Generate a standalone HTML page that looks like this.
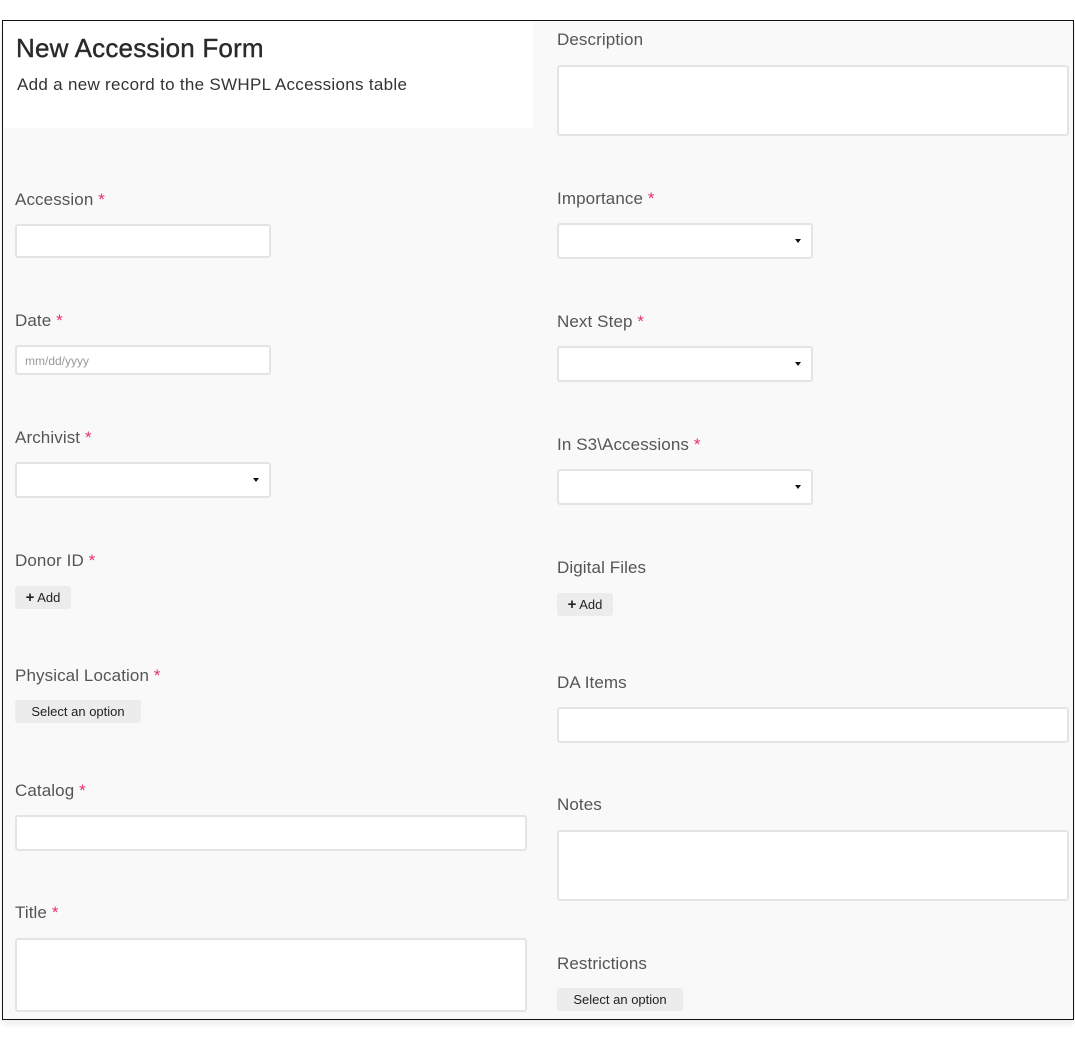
<!DOCTYPE html>
<html><head><meta charset="utf-8"><style>
*{box-sizing:border-box;margin:0;padding:0}
body{width:1075px;height:1039px;background:#fff;position:relative;overflow:hidden;font-family:"Liberation Sans",sans-serif}
.frame{position:absolute;left:2px;top:20px;width:1072px;height:1000px;border:1.5px solid #111;background:#f9f9f9;box-shadow:0 4px 6px rgba(0,0,0,.08)}
.hdr{position:absolute;left:3px;top:21px;width:530px;height:107px;background:#fff}
.t{position:absolute;left:16px;top:33px;font-size:26px;color:#2a2a2a;letter-spacing:0.2px;-webkit-text-stroke:0.4px #2a2a2a}
.st{position:absolute;left:17px;top:75px;font-size:17px;color:#333;letter-spacing:0.3px}
.l{position:absolute;font-size:17px;color:#555;line-height:20px;margin-top:1px;letter-spacing:0.1px}
.l b{color:#e8336b;font-weight:normal}
.i{position:absolute;background:#fff;border:2px solid #e4e4e4;border-radius:3px}
.sel:after{content:"";position:absolute;right:10px;top:50%;margin-top:-2px;border-left:3.5px solid transparent;border-right:3.5px solid transparent;border-top:4px solid #111}
.btn{position:absolute;background:#ececec;border-radius:3px;font-size:13px;color:#222;text-align:center}
.ph{position:absolute;left:8px;top:7px;font-size:12px;color:#999}
</style></head><body>
<div class="frame"></div>
<div class="hdr"></div>
<div class="t">New Accession Form</div>
<div class="st">Add a new record to the SWHPL Accessions table</div>

<div class="l" style="left:15px;top:189px">Accession <b>*</b></div>
<div class="i" style="left:15px;top:224px;width:256px;height:34px"></div>
<div class="l" style="left:15px;top:310px">Date <b>*</b></div>
<div class="i" style="left:15px;top:345px;width:256px;height:30px"><span class="ph">mm/dd/yyyy</span></div>
<div class="l" style="left:15px;top:427px">Archivist <b>*</b></div>
<div class="i sel" style="left:15px;top:462px;width:256px;height:36px"></div>
<div class="l" style="left:15px;top:550px">Donor ID <b>*</b></div>
<div class="btn" style="left:15px;top:586px;width:56px;height:23px;line-height:23px"><b style="font-size:15px">+</b> Add</div>
<div class="l" style="left:15px;top:665px">Physical Location <b>*</b></div>
<div class="btn" style="left:15px;top:700px;width:126px;height:23px;line-height:24px">Select an option</div>
<div class="l" style="left:15px;top:780px">Catalog <b>*</b></div>
<div class="i" style="left:15px;top:815px;width:512px;height:36px"></div>
<div class="l" style="left:15px;top:902px">Title <b>*</b></div>
<div class="i" style="left:15px;top:938px;width:512px;height:74px"></div>

<div class="l" style="left:557px;top:29px">Description</div>
<div class="i" style="left:557px;top:65px;width:512px;height:71px"></div>
<div class="l" style="left:557px;top:188px">Importance <b>*</b></div>
<div class="i sel" style="left:557px;top:223px;width:256px;height:36px"></div>
<div class="l" style="left:557px;top:311px">Next Step <b>*</b></div>
<div class="i sel" style="left:557px;top:346px;width:256px;height:36px"></div>
<div class="l" style="left:557px;top:434px">In S3\Accessions <b>*</b></div>
<div class="i sel" style="left:557px;top:469px;width:256px;height:36px"></div>
<div class="l" style="left:557px;top:557px">Digital Files</div>
<div class="btn" style="left:557px;top:593px;width:56px;height:23px;line-height:23px"><b style="font-size:15px">+</b> Add</div>
<div class="l" style="left:557px;top:672px">DA Items</div>
<div class="i" style="left:557px;top:707px;width:512px;height:36px"></div>
<div class="l" style="left:557px;top:794px">Notes</div>
<div class="i" style="left:557px;top:830px;width:512px;height:71px"></div>
<div class="l" style="left:557px;top:953px">Restrictions</div>
<div class="btn" style="left:557px;top:988px;width:126px;height:23px;line-height:24px">Select an option</div>
</body></html>
